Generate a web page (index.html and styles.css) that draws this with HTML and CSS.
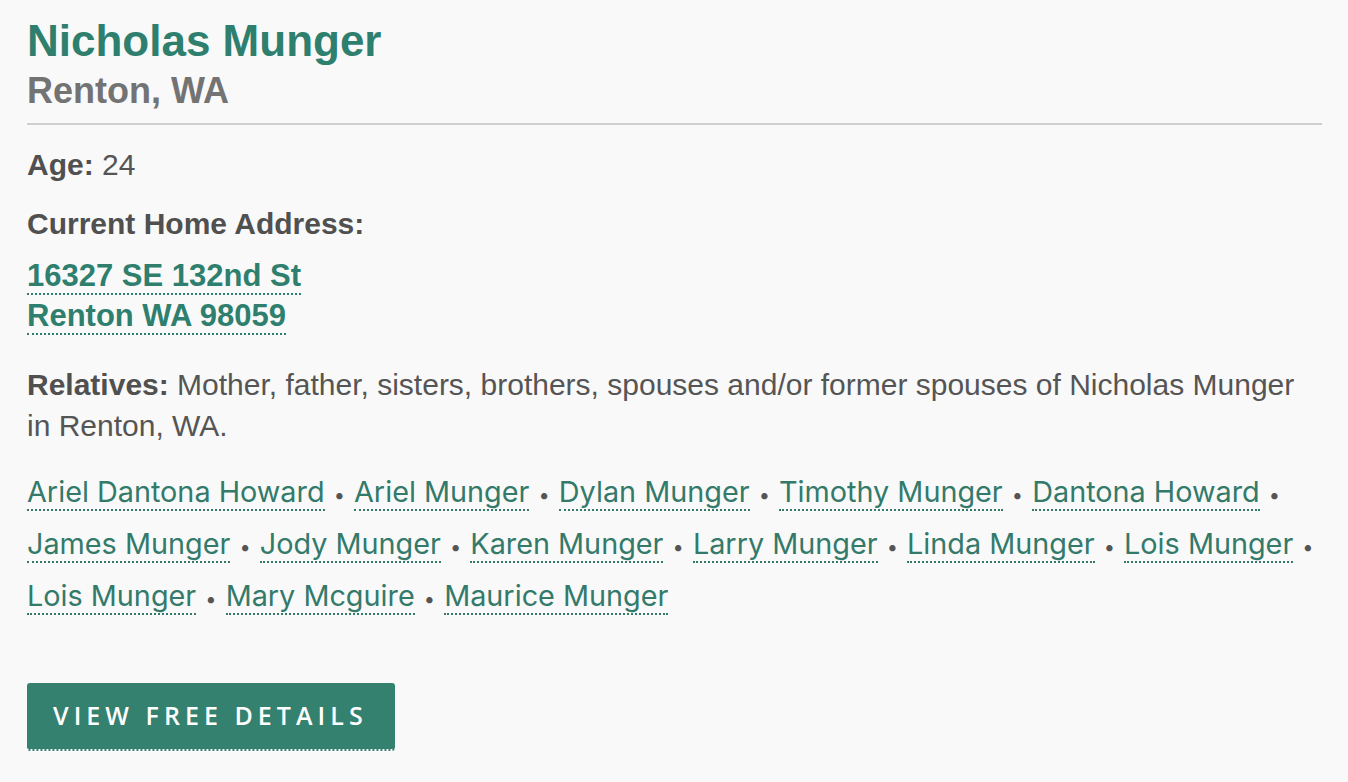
FILE: index.html
```html
<!DOCTYPE html>
<html lang="en">
<head>
  <meta charset="UTF-8">
  <meta name="viewport" content="width=device-width, initial-scale=1.0">
  <title>Nicholas Munger - Renton, WA</title>
  <link rel="stylesheet" href="styles.css">
</head>
<body>
  <main class="record">
    <header class="record-head">
      <h1>Nicholas Munger</h1>
      <h2>Renton, WA</h2>
    </header>

    <p class="field age"><strong>Age:</strong> 24</p>

    <p class="field label"><strong>Current Home Address:</strong></p>
    <p class="address">
      <a href="#">16327 SE 132nd St</a><br>
      <a href="#">Renton WA 98059</a>
    </p>

    <p class="field relatives-intro"><strong>Relatives:</strong> Mother, father, sisters, brothers, spouses and/or former spouses of Nicholas Munger in Renton, WA.</p>

    <!-- nbsp keeps each bullet on the same line as the name before it -->
    <p class="relatives">
      <a href="#">Ariel Dantona Howard</a>&nbsp;<span class="dot">&bull;</span>
      <a href="#">Ariel Munger</a>&nbsp;<span class="dot">&bull;</span>
      <a href="#">Dylan Munger</a>&nbsp;<span class="dot">&bull;</span>
      <a href="#">Timothy Munger</a>&nbsp;<span class="dot">&bull;</span>
      <a href="#">Dantona Howard</a>&nbsp;<span class="dot">&bull;</span>
      <a href="#">James Munger</a>&nbsp;<span class="dot">&bull;</span>
      <a href="#">Jody Munger</a>&nbsp;<span class="dot">&bull;</span>
      <a href="#">Karen Munger</a>&nbsp;<span class="dot">&bull;</span>
      <a href="#">Larry Munger</a>&nbsp;<span class="dot">&bull;</span>
      <a href="#">Linda Munger</a>&nbsp;<span class="dot">&bull;</span>
      <a href="#">Lois Munger</a>&nbsp;<span class="dot">&bull;</span>
      <a href="#">Lois Munger</a>&nbsp;<span class="dot">&bull;</span>
      <a href="#">Mary Mcguire</a>&nbsp;<span class="dot">&bull;</span>
      <a href="#">Maurice Munger</a>
    </p>

    <a class="btn" href="#">View Free Details</a>
  </main>
</body>
</html>
```

FILE: styles.css
```css
body {
  margin: 0;
  font-family: "Liberation Sans", Arial, sans-serif;
  background-color: #f9f9f9;
  color: #555;
}
.record {
  padding: 14px 26px 30px 27px;
}
.record-head {
  border-bottom: 2px solid #cfcfcf;
  padding-bottom: 9px;
}
.record-head h1 {
  margin: 0;
  font-size: 44px;
  line-height: 54px;
  color: #2e7f6e;
}
.record-head h2 {
  margin: 0;
  font-size: 36px;
  line-height: 46px;
  color: #737373;
}
.field {
  font-size: 30px;
  line-height: 41px;
  margin: 17px 0 0;
}
.field strong {
  color: #505050;
}
.field.age {
  margin-top: 19px;
}
.field.label {
  margin-top: 18px;
}
.address {
  margin: 12px 0 0;
  font-size: 31px;
  font-weight: bold;
  line-height: 40px;
}
.address a {
  color: #2e7f6e;
  text-decoration: none;
  border-bottom: 2px dotted #2e7f6e;
}
.relatives-intro {
  margin-top: 28px;
}
.relatives {
  margin: 20px -12px 0 0;
  font-family: Inter, "Liberation Sans", sans-serif;
  font-size: 28.8px;
  line-height: 52px;
}
.relatives a {
  color: #337a6b;
  text-decoration: none;
  white-space: nowrap;
  border-bottom: 2px dotted #337a6b;
}
.relatives .dot {
  color: #555;
  font-size: 20px;
  line-height: 1;
  padding: 0 1px;
}
.btn {
  display: inline-block;
  margin-top: 61px;
  padding: 15px 27px 17px 26px;
  background: #358170;
  color: #fff;
  border-radius: 3px;
  border-bottom: 2px dotted #fff;
  font-family: "Open Sans", sans-serif;
  font-size: 25px;
  font-weight: 600;
  letter-spacing: 5.05px;
  text-transform: uppercase;
  text-decoration: none;
}
```
